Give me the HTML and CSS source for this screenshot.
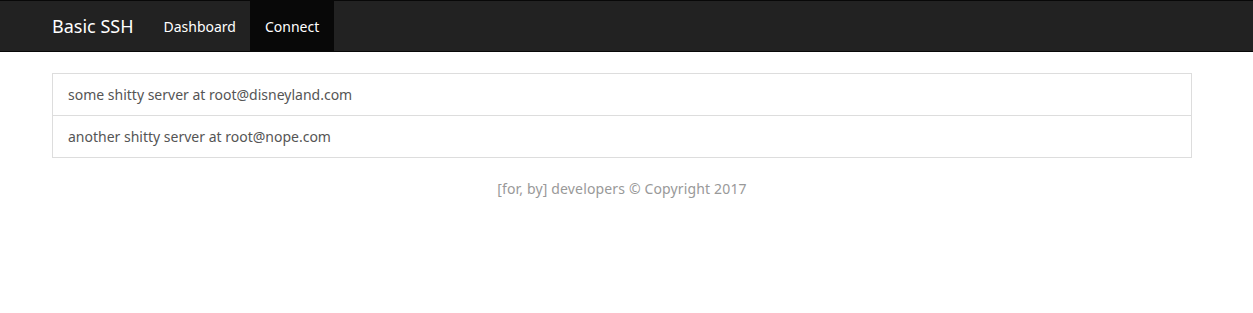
FILE: index.html
```html
<!DOCTYPE html>
<html lang="en">
<head>
    <meta charset="UTF-8">
    <title>Basic SSH</title>
    <link rel="stylesheet" href="styles.css">
</head>
<body>
    <nav class="navbar">
        <div class="navbar-inner">
            <a href="#" class="brand">Basic SSH</a>
            <ul class="nav">
                <li><a href="#">Dashboard</a></li>
                <li class="active"><a href="#">Connect</a></li>
            </ul>
        </div>
    </nav>

    <div class="container">
        <div class="list-group">
            <a href="#" class="list-item">some shitty server at root@disneyland.com</a>
            <a href="#" class="list-item">another shitty server at root@nope.com</a>
        </div>
        <footer class="footer">[for, by] developers &copy; Copyright 2017</footer>
    </div>
</body>
</html>
```

FILE: styles.css
```css
body {
    margin: 0;
    font-family: "Noto Sans", "Open Sans", sans-serif;
    font-size: 14px;
    color: #555;
    background-color: #fff;
}
a {
    text-decoration: none;
}
.navbar {
    background-color: #222;
    border-top: 1px solid #080808;
    border-bottom: 1px solid #080808;
    height: 50px;
}
.navbar-inner {
    display: flex;
    height: 100%;
    margin-left: 37px;
}
.brand {
    color: #fff;
    font-size: 18px;
    padding: 1px 15px 0;
    line-height: 49px;
}
.nav {
    display: flex;
    list-style: none;
    margin: 0;
    padding: 0;
}
.nav a {
    display: block;
    color: #fff;
    padding: 1px 15px 0;
    line-height: 49px;
}
.nav li:first-child a {
    padding-right: 14px;
}
.nav .active a {
    background-color: #080808;
}
.container {
    margin-left: 52px;
    width: 1140px;
    padding-top: 21px;
}
.list-group {
    border: 1px solid #ddd;
}
.list-item {
    display: block;
    color: #555;
    padding: 0 15px;
    line-height: 41px;
}
.list-item + .list-item {
    border-top: 1px solid #ddd;
}
.footer {
    text-align: center;
    color: #999;
    padding-top: 21px;
    line-height: 20px;
    letter-spacing: 0.15px;
}
```
